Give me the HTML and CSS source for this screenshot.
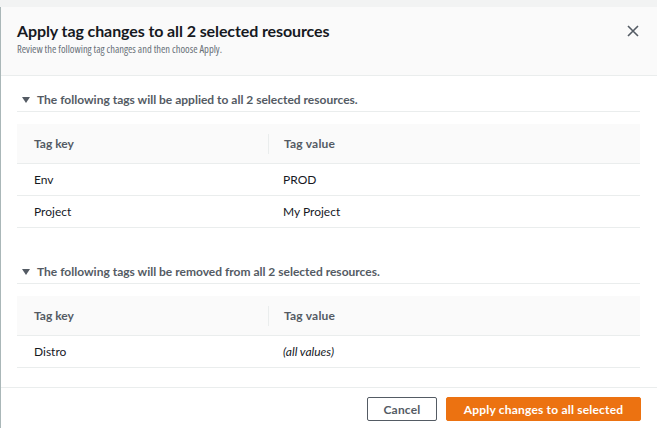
FILE: index.html
```html
<!DOCTYPE html>
<html>
<head>
<meta charset="utf-8">
<link rel="stylesheet" href="styles.css">
</head>
<body>
<div class="modal">
  <div class="header">
    <div class="titles">
      <h1 class="title">Apply tag changes to all 2 selected resources</h1>
      <p class="subtitle">Review the following tag changes and then choose Apply.</p>
    </div>
    <button class="close" aria-label="Close">
      <svg width="12" height="12" viewBox="0 0 12 12"><path d="M1 1L11 11M11 1L1 11" stroke="#545b64" stroke-width="1.6" fill="none"/></svg>
    </button>
  </div>
  <div class="body">
    <section class="section">
      <div class="section-title">
        <svg class="caret" width="8" height="6" viewBox="0 0 8 6"><path d="M0 0H8L4 6Z" fill="#545b64"/></svg>
        <span>The following tags will be applied to all 2 selected resources.</span>
      </div>
      <div class="table">
        <div class="row head">
          <div class="cell">Tag key</div>
          <div class="cell divided">Tag value</div>
        </div>
        <div class="row">
          <div class="cell">Env</div>
          <div class="cell">PROD</div>
        </div>
        <div class="row">
          <div class="cell">Project</div>
          <div class="cell">My Project</div>
        </div>
      </div>
    </section>
    <section class="section second">
      <div class="section-title">
        <svg class="caret" width="8" height="6" viewBox="0 0 8 6"><path d="M0 0H8L4 6Z" fill="#545b64"/></svg>
        <span>The following tags will be removed from all 2 selected resources.</span>
      </div>
      <div class="table">
        <div class="row head">
          <div class="cell">Tag key</div>
          <div class="cell divided">Tag value</div>
        </div>
        <div class="row">
          <div class="cell">Distro</div>
          <div class="cell"><em>(all values)</em></div>
        </div>
      </div>
    </section>
  </div>
  <div class="footer">
    <button class="btn cancel">Cancel</button>
    <button class="btn primary">Apply changes to all selected</button>
  </div>
</div>
</body>
</html>
```
FILE: styles.css
```css
* { box-sizing: border-box; }
html, body { margin: 0; padding: 0; }
body {
  background: #f2f3f3;
  font-family: Lato, "Liberation Sans", sans-serif;
  color: #16191f;
  font-size: 12px;
  overflow: hidden;
}
.modal {
  margin-top: 7px;
  background: #ffffff;
  border-left: 1px solid #aab7b8;
  height: 421px;
}
.header {
  display: flex;
  justify-content: space-between;
  align-items: flex-start;
  background: #fafafa;
  border-bottom: 1px solid #eaeded;
  padding: 14px 16px 18px 16px;
}
.title {
  margin: 0;
  font-size: 16px;
  line-height: 20px;
  font-weight: 700;
  color: #16191f;
  letter-spacing: -0.1px;
}
.subtitle {
  margin: 0;
  font-family: "Open Sans", Lato, sans-serif;
  font-stretch: 75%;
  font-size: 10.5px;
  line-height: 16px;
  color: #687078;
}
.close {
  border: 0;
  background: transparent;
  padding: 0;
  margin-top: 4px;
  margin-right: 2px;
  width: 12px;
  height: 12px;
  display: flex;
}
.body {
  padding: 16px 17px 19px 16px;
}
.section-title {
  display: flex;
  align-items: center;
  gap: 7px;
  padding: 0 0 3px 5px;
  border-bottom: 1px solid #eaeded;
  font-weight: 700;
  font-size: 12px;
  line-height: 16px;
  color: #545b64;
}
.caret { flex: none; }
.second { margin-top: 36px; }
.table { margin-top: 12px; }
.row {
  display: grid;
  grid-template-columns: 251px 1fr;
  border-bottom: 1px solid #eaeded;
  height: 32px;
  align-items: center;
}
.row.head {
  background: #fafafa;
  height: 40px;
  font-weight: 700;
  color: #545b64;
}
.cell {
  padding-left: 17px;
  line-height: 16px;
}
.cell + .cell { padding-left: 15px; }
.divided {
  border-left: 1px solid #eaeded;
  line-height: 20px;
  letter-spacing: 0.2px;
}
em { font-style: italic; }
.footer {
  border-top: 1px solid #eaeded;
  display: flex;
  justify-content: flex-end;
  gap: 9px;
  padding: 9px 16px 0 0;
}
.btn {
  font-family: Lato, "Liberation Sans", sans-serif;
  font-size: 12px;
  font-weight: 700;
  height: 24px;
  border-radius: 2px;
  padding: 0 10px;
  cursor: pointer;
  letter-spacing: 0.2px;
}
.cancel {
  background: #ffffff;
  border: 1px solid #545b64;
  color: #545b64;
  width: 70px;
}
.primary {
  background: #ec7211;
  border: 1px solid #ec7211;
  color: #ffffff;
  width: 195px;
}
```
